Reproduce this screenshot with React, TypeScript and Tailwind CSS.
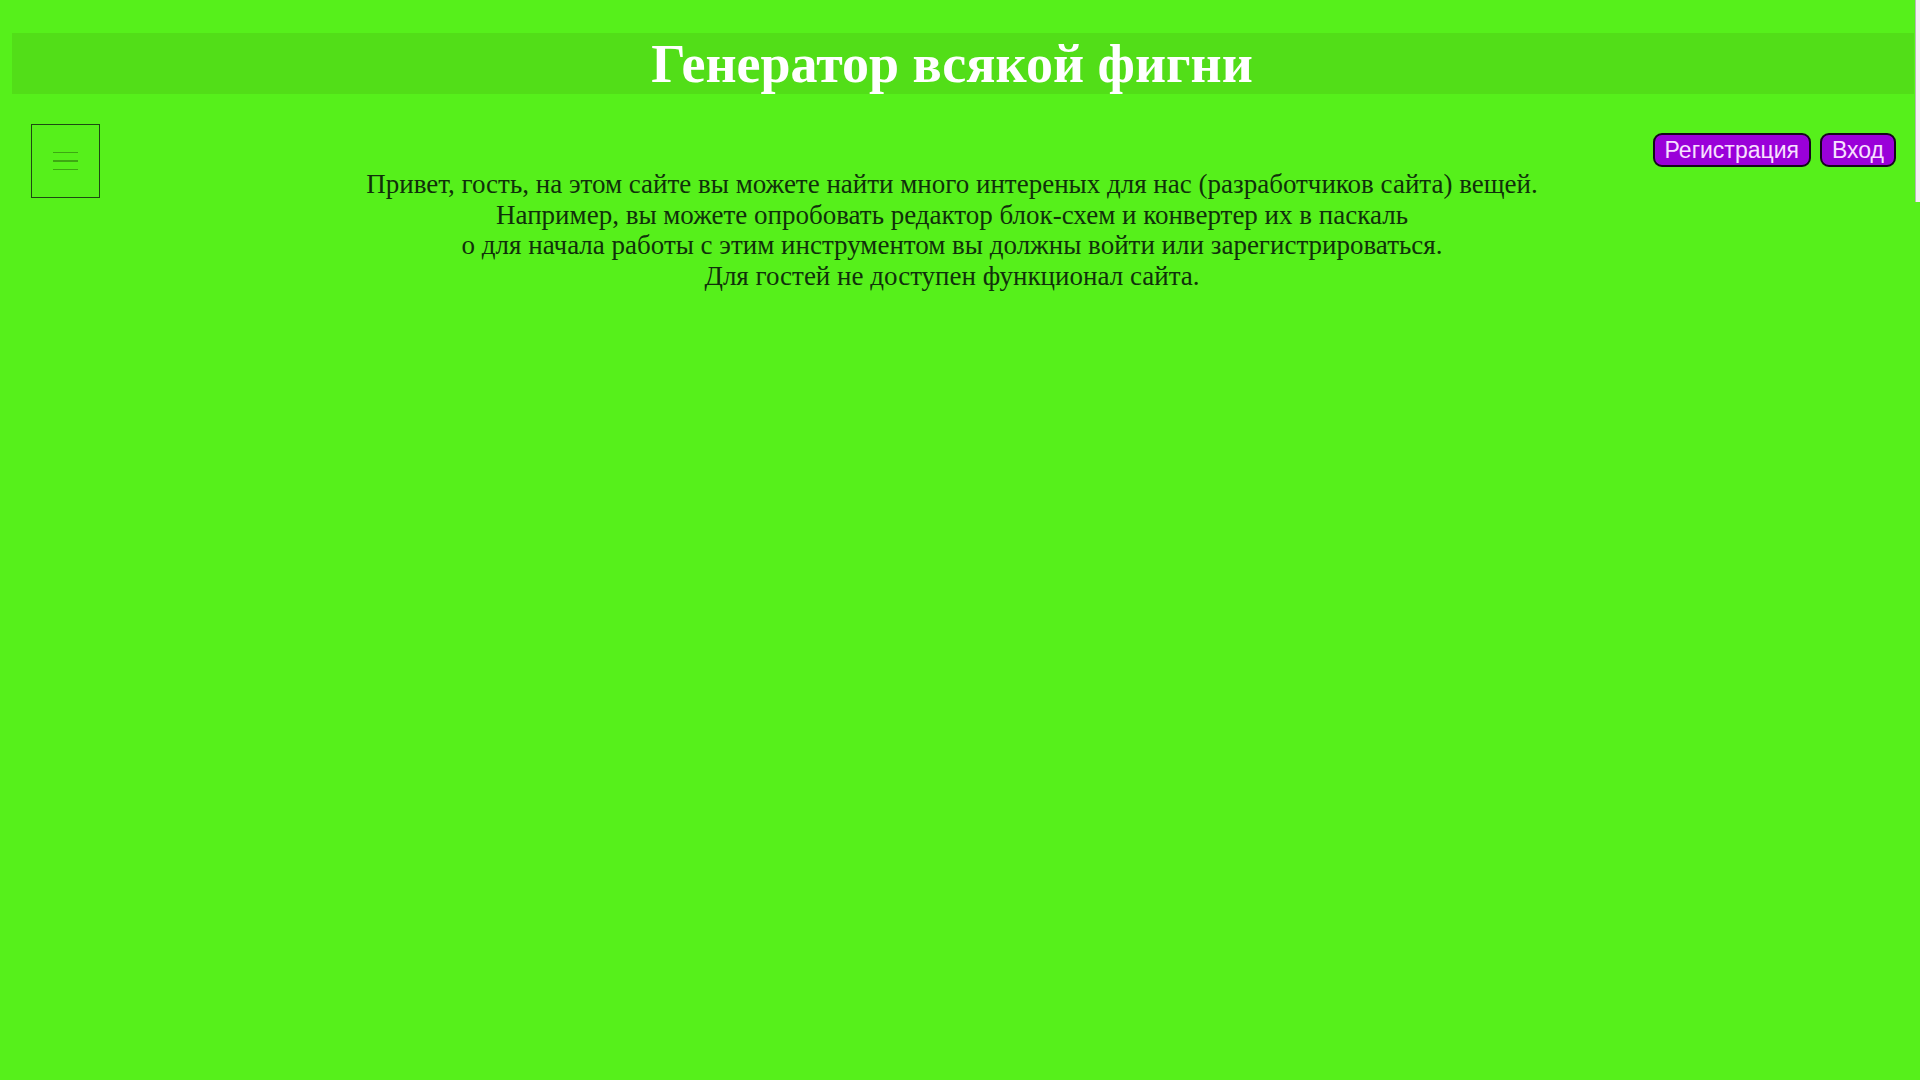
const lines = [
  "Привет, гость, на этом сайте вы можете найти много интереных для нас (разработчиков сайта) вещей.",
  "Например, вы можете опробовать редактор блок-схем и конвертер их в паскаль",
  "о для начала работы с этим инструментом вы должны войти или зарегистрироваться.",
  "Для гостей не доступен функционал сайта.",
];

const MenuButton = () => (
  <button className="w-[69px] h-[74px] border-[1.5px] border-[#1d4a12] flex flex-col items-center justify-center gap-[7px]">
    <span className="block w-[25px] h-[1.5px] bg-[#3da812]" />
    <span className="block w-[25px] h-[1.5px] bg-[#3da812]" />
    <span className="block w-[25px] h-[1.5px] bg-[#3da812]" />
  </button>
);

const AuthButton = ({ label }: { label: string }) => (
  <button className="h-[34px] px-[10px] rounded-[9px] border-[2.5px] border-[#14061c] bg-[#9a00d9] text-[#f8e0ff] text-[23px] leading-none font-['Liberation_Sans',Arial,sans-serif]">
    {label}
  </button>
);

export default function App() {
  return (
    <div className="relative min-h-screen w-full bg-[#56f01b] font-['Liberation_Serif','Times_New_Roman',serif] overflow-hidden">
      <div className="pt-[33px] pl-[12px] pr-[6px]">
        <header className="h-[61px] bg-[#52de18] flex items-center justify-center pr-[22px] pt-[1px]">
          <h1 className="text-[54px] leading-[61px] font-bold text-white">Генератор всякой фигни</h1>
        </header>
      </div>

      <div className="mr-[16px] mt-[30px] grid grid-cols-[1fr_auto_1fr] items-start">
        <div className="pl-[31px]">
          <MenuButton />
        </div>
        <div className="mt-[45px] text-center text-[27px] leading-[30.6px] text-[#10300a]">
          {lines.map((l) => (
            <div key={l} className="whitespace-nowrap">
              {l}
            </div>
          ))}
        </div>
        <div className="flex justify-end gap-[9px] pr-[8px] mt-[9px]">
          <AuthButton label="Регистрация" />
          <AuthButton label="Вход" />
        </div>
      </div>

      <div className="absolute right-0 top-0 w-[5px] h-[202px] bg-[#f2f2f2] border-l border-[#b8b8b8]" />
    </div>
  );
}
